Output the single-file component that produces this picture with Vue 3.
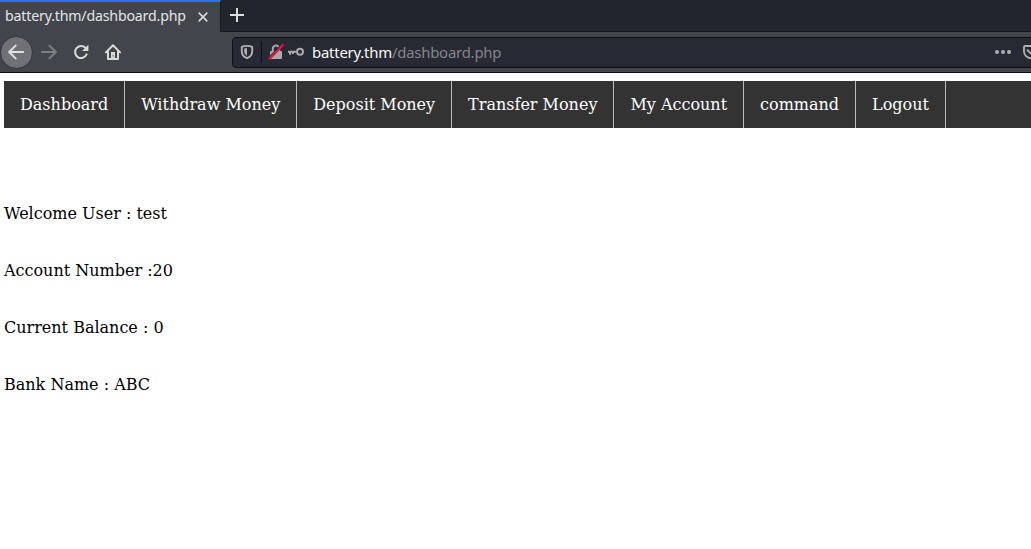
<script setup>
const links = ['Dashboard', 'Withdraw Money', 'Deposit Money', 'Transfer Money', 'My Account', 'command', 'Logout']
const details = ['Welcome User : test', 'Account Number :20', 'Current Balance : 0', 'Bank Name : ABC']
</script>

<template>
  <div class="window">
    <header class="chrome">
      <div class="tabs">
        <div class="tab">
          <span class="tab-title">battery.thm/dashboard.php</span>
          <svg class="close" width="10" height="10" viewBox="0 0 10 10"><path d="M.7.7 9.3 9.3M9.3.7.7 9.3" /></svg>
        </div>
        <svg class="plus" width="14" height="14" viewBox="0 0 14 14"><path d="M7 0v14M0 7h14" /></svg>
      </div>
      <div class="toolbar">
        <div class="back">
          <svg width="16" height="16" viewBox="0 0 16 16"><path d="M15.2 8H1.4M7.6 1.6 1.2 8l6.4 6.4" /></svg>
        </div>
        <svg class="forward" width="16" height="16" viewBox="0 0 16 16"><path d="M.8 8h13.8M8.4 1.6 14.8 8l-6.4 6.4" /></svg>
        <svg class="reload" width="16" height="16" viewBox="0 0 16 16">
          <path class="arc" d="M12.9 4.4A6 6 0 1 0 13.6 10.4" />
          <path class="head" d="M15.4.8v6.3h-6.3z" />
        </svg>
        <svg class="home" width="16" height="16" viewBox="0 0 16 16">
          <path class="line" d="M.9 8.4 8 1.3l7.1 7.1M3 7.4v7.5h10V7.4" />
          <path class="door" fill-rule="evenodd" d="M6 8h4v7H6zM7.5 11.2v1.3h1v-1.3z" />
        </svg>
        <div class="url-bar">
          <svg class="shield" width="14" height="16" viewBox="0 0 14 16">
            <path class="line" d="M7 1.9C5 1.9 3.2 2.2 1.8 2.8v4.1c0 3.6 1.9 6 5.2 7.3 3.3-1.3 5.2-3.7 5.2-7.3V2.8C10.800 2.200 9 1.900 7 1.900z" />
            <path class="fill" d="M7 4.200c-1.200 0-2 .1-2.800.4v2.500c0 2.100.9 3.600 2.800 4.800z" />
          </svg>
          <span class="divider"></span>
          <svg class="lock" width="16" height="16" viewBox="0 0 16 16">
            <path class="shackle" d="M4.800 7V4.800a3.200 3.200 0 0 1 6.400 0V7" />
            <rect class="body" x="2" y="7" width="12" height="8" rx="1" />
            <path class="gap" d="M1 14.500 14.200 1.300" />
            <path class="slash" d="M1.500 14.700 14.700 1" />
          </svg>
          <svg class="key" width="16" height="10" viewBox="0 0 16 10">
            <path d="M0 4.800h9M2.100 5v2.700M5 5v1.900" />
            <circle cx="12" cy="4.800" r="3" />
          </svg>
          <span class="url"><b>battery.thm</b>/dashboard.php</span>
          <svg class="dots" width="16" height="4" viewBox="0 0 16 4"><circle cx="2" cy="2" r="2" /><circle cx="8" cy="2" r="2" /><circle cx="14" cy="2" r="2" /></svg>
          <svg class="pocket" width="16" height="16" viewBox="0 0 16 16">
            <path d="M2.200 2h11.600q1.200 0 1.200 1.200v4a7 7 0 0 1-14 0v-4Q1 2 2.200 2zM4.500 6.200 8 9.600l3.500-3.400" />
          </svg>
        </div>
      </div>
    </header>
    <main class="page">
      <nav class="nav"><a v-for="link in links" :key="link">{{ link }}</a></nav>
      <section class="details"><p v-for="line in details" :key="line">{{ line }}</p></section>
    </main>
  </div>
</template>

<style>
body { margin: 0; background: #fff; }
</style>

<style scoped>
.window { width: 1031px; height: 549px; overflow: hidden; background: #fff; }
svg { flex: none; fill: none; display: block; }
.chrome { height: 73px; box-sizing: border-box; border-bottom: 1px solid #0c0c0d; background: #42454c; font-family: "Noto Sans", sans-serif; }
.tabs { height: 32px; display: flex; background: #23252e; box-shadow: inset 0 -1px #17181d; }
.tab { box-sizing: border-box; width: 221px; height: 32px; padding-left: 5px; display: flex; align-items: center; border-top: 2px solid #2675f8; border-right: 1px solid #17181d; background: #42454c; }
.tab-title { width: 193px; font-size: 14.2px; letter-spacing: -.19px; line-height: 20px; margin-top: -2px; color: #e3e6e6; white-space: nowrap; }
.close { stroke: #d5d5d2; stroke-width: 1.7; margin-top: -1px; }
.plus { margin: 8px 0 0 9px; stroke: #dededb; stroke-width: 2; }
.toolbar { height: 40px; display: flex; align-items: center; }
.back { box-sizing: border-box; width: 33px; height: 33px; border: 1px solid #323439; border-radius: 50%; background: #707177; display: flex; align-items: center; justify-content: center; stroke: #e0e0dc; stroke-width: 2; stroke-linecap: round; stroke-linejoin: round; flex: none; }
.back svg { margin-left: -1px; }
.forward { margin-left: 8px; stroke: #7c7e82; stroke-width: 2; stroke-linecap: round; stroke-linejoin: round; }
.reload { margin-left: 16px; }
.arc { stroke: #d9d9d6; stroke-width: 2.1; stroke-linecap: round; }
.head, .door { fill: #d9d9d6; }
.home { margin-left: 16px; }
.home .line { stroke: #d9d9d6; stroke-width: 2; stroke-linecap: round; stroke-linejoin: round; }
.url-bar { box-sizing: border-box; width: 830px; height: 31px; margin-left: 111px; flex: none; display: flex; align-items: center; border: 1px solid #0e0f13; border-radius: 4px; background: #272934; }
.shield { margin-left: 7px; }
.shield .line { stroke: #b0b0af; stroke-width: 1.9; }
.shield .fill { fill: #b0b0af; }
.divider { width: 1px; height: 22px; margin-left: 7px; background: #0e0f13; }
.lock { margin-left: 6px; }
.shackle { stroke: #a9a9a9; stroke-width: 2; }
.body { fill: #a9a9a9; }
.gap { stroke: #272934; stroke-width: 3; }
.slash { stroke: #f50f43; stroke-width: 2; stroke-linecap: round; }
.key { margin-left: 4px; stroke: #a9a9a9; stroke-width: 2; }
.url { width: 683px; margin-left: 8px; font-size: 14.9px; letter-spacing: -.22px; line-height: 20px; color: #85868a; white-space: nowrap; }
.url b { font-weight: 400; color: #fafafa; }
.dots { fill: #b0b0af; }
.pocket { margin-left: 12px; stroke: #b0b0af; stroke-width: 1.9; stroke-linecap: round; stroke-linejoin: round; }
.page { padding: 8px 0 0 4px; font: 16px/19px "DejaVu Serif", serif; color: #000; }
.nav { display: flex; height: 47px; background: #333; }
.nav a { padding: 14px 16px; border-right: 1px solid #bbb; color: #fff; white-space: nowrap; }
.details { padding-top: 76px; }
.details p { margin: 0 0 38px; }
</style>
